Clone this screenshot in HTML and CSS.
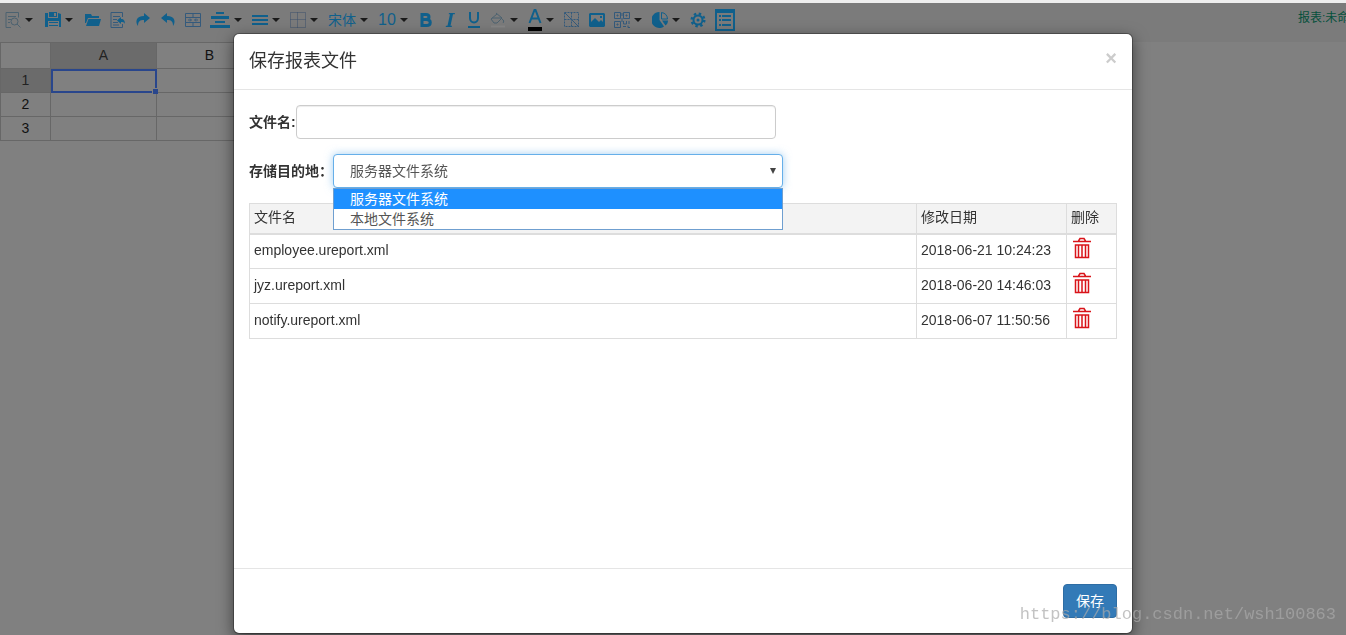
FILE: index.html
```html
<!DOCTYPE html>
<html lang="zh-CN">
<head>
<meta charset="utf-8">
<title>保存报表文件</title>
<link rel="stylesheet" href="styles.css">
</head>
<body>
<header class="toolbar">
  <div class="tools">
    <button class="tool file menu" aria-label="预览"><svg width="16" height="16" viewBox="0 0 16 16" class="line thin faded"><path d="M6 15.500H1V.5h12.500v5M3 4.500h8M3 7.500h3M3 10.500h2"/><circle cx="9.500" cy="9.500" r="3.500"/><path d="M12 12l3.500 3.500"/></svg></button>
    <button class="tool file menu" aria-label="保存"><svg width="16" height="16" viewBox="0 0 16 16" class="solid"><path fill-rule="evenodd" d="M0 1h3v5h10V1l3 1v13h-2V9H3v6H0zM4 0h8v5H4zm5 1v3h2V1zM4 10h9v1H4zm0 3h9v1H4z"/></svg></button>
    <button class="tool" aria-label="打开"><svg width="16" height="16" viewBox="0 0 16 16" class="solid"><path d="M0 2h6l1 2h7v2H3L1 11H0zM3.500 7H16l-2 7H1z"/></svg></button>
    <button class="tool" aria-label="导入"><svg width="16" height="16" viewBox="0 0 16 16" class="line thin"><path d="M12.500 5V.5H1v15h11.500V12M3 4.500h7M3 7.500h4M3 10.500h5M3 13h6"/><path class="solid" d="M7 8.500L11 5v2c3 0 4 2 4 5-1-2-2-2-4-2v2z"/></svg></button>
    <button class="tool" aria-label="重做"><svg width="16" height="16" viewBox="0 0 16 16" class="solid"><path d="M9 1l6 5-6 5V8C5 8 3 9 3 14 0 10 1 4 9 4z"/></svg></button>
    <button class="tool" aria-label="撤销"><svg width="16" height="16" viewBox="0 0 16 16" class="solid"><path d="M7 1L1 6l6 5V8c4 0 6 1 6 6 3-4 2-10-6-10z"/></svg></button>
    <button class="tool" aria-label="合并单元格"><svg width="16" height="16" viewBox="0 0 16 16" class="line thin"><path d="M.5 1.500h15v13H.5zM.5 5.500h15M.5 10.500h15M8 1.500v4M8 10.500v4M3 8h3M10 8h3M5 6.500L6.500 8 5 9.500M11 6.500L9.500 8 11 9.500"/></svg></button>
    <button class="tool menu" aria-label="水平对齐"><svg width="20" height="16" viewBox="0 0 20 16" class="solid"><path d="M6 0h8v2H6zM1 4h18v3H1zM5 9h10v2H5zM0 13h20v3H0z"/></svg></button>
    <button class="tool menu" aria-label="垂直对齐"><svg width="16" height="16" viewBox="0 0 16 16" class="solid"><path d="M0 3h16v2H0zM0 7h16v2H0zM0 11h16v2H0z"/></svg></button>
    <button class="tool menu" aria-label="边框"><svg width="16" height="16" viewBox="0 0 16 16" class="line dotted"><path d="M.5.500h15v15H.5zM.5 7.500h15M7.500 .5v15"/></svg></button>
    <button class="tool menu">宋体</button>
    <button class="tool menu size">10</button>
    <button class="tool format" aria-label="粗体"><svg width="12" height="14" viewBox="0 0 12 14" fill="none" stroke="#10608c" stroke-width="3"><path d="M2 1.500h4c4 0 4 5 0 5H2zM2 6.500h4.500c5 0 5 6 0 6H2z"/></svg></button>
    <button class="tool format" aria-label="斜体"><svg width="12" height="14" viewBox="0 0 12 14" class="solid"><path d="M5 0h6l-.3 1.300H9L6.500 12.700H8L7.700 14h-6L2 12.700h1.500L6 1.300H4.700z"/></svg></button>
    <button class="tool format" aria-label="下划线"><svg width="14" height="16" viewBox="0 0 14 16" fill="none" stroke="#10608c" stroke-width="2"><path d="M3 0v6c0 6 8 6 8 0V0M1 15h12"/></svg></button>
    <button class="tool menu" aria-label="背景色"><svg width="16" height="16" viewBox="0 0 16 16" class="line thin faded"><path d="M6 1l6 5-5 5H4L1 7l6-5M2 6h10M12 7c2 1 2 3 1 4"/><path d="M1 14.500h14" stroke="#858585" stroke-width="2"/></svg></button>
    <button class="tool menu" aria-label="字体颜色"><svg width="14" height="22" viewBox="0 0 14 22"><path fill="none" stroke="#10608c" stroke-width="2" d="M1.500 14L6.500 1h1l5 13M3.500 9.500h7"/><path d="M0 18h14v4H0z"/></svg></button>
    <button class="tool" aria-label="斜线表头"><svg width="16" height="16" viewBox="0 0 16 16" class="line thin"><path stroke-dasharray="2 1" d="M.5.500h14v14H.5zM.5 7.500h14M7.500.500v14"/><path d="M1 1l14 14"/></svg></button>
    <button class="tool" aria-label="图片"><svg width="16" height="16" viewBox="0 0 16 16" class="solid"><path fill-rule="evenodd" d="M1 1h14l1 1v12l-1 1H1l-1-1V2zm1 2v7l4-4 4 4 2-2 2 2V3zm9 1h2v2h-2z"/></svg></button>
    <button class="tool menu" aria-label="二维码"><svg width="16" height="16" viewBox="0 0 16 16" class="line thin"><path d="M.5.500h6v6h-6zM9.500.500h6v6h-6zM.5 9.500h6v6h-6zM3 3h1v1H3zM12 3h1v1h-1zM3 12h1v1H3zM9.500 9v3h3V9M15 9v3M9 14.500h3M14 13.500v2h2M8 1v3M8 6v4"/></svg></button>
    <button class="tool menu" aria-label="图表"><svg width="16" height="16" viewBox="0 0 16 16" class="solid"><path d="M7.500 0v8l4.500 6.500A8 8 0 1 1 7.500 0z"/><path class="line" d="M9.500.500a7 7 0 0 1 6 6.500h-6z"/><path d="M10 8.500h6c0 2-1 4-2.500 5z"/></svg></button>
    <button class="tool" aria-label="设置"><svg width="16" height="16" viewBox="0 0 16 16"><g fill="none" stroke="#10608c"><circle cx="8" cy="8" r="4.500" stroke-width="2"/><circle cx="8" cy="8" r="6.300" stroke-width="2.400" stroke-dasharray="2.400 2.548"/></g><circle cx="8" cy="8" r="1.500" class="solid"/></svg></button>
    <button class="tool" aria-label="属性"><svg width="20" height="22" viewBox="0 0 20 22" class="solid"><path fill-rule="evenodd" d="M0 0h20v22H0zm2 4v16h16V4zm2 2h2v2H4zm3 0h9v2H7zm-3 4h2v2H4zm3 0h9v2H7zm-3 5h2v2H4zm3 0h9v2H7z"/></svg></button>
  </div>
  <span class="report-name">报表:未命名</span>
</header>
<table class="sheet">
  <tr><th></th><th class="active column">A</th><th class="column">B</th></tr>
  <tr><th class="active">1</th><td class="selected"><i class="handle"></i></td><td></td></tr>
  <tr><th>2</th><td></td><td></td></tr>
  <tr><th>3</th><td></td><td></td></tr>
</table>
<div class="overlay">
  <section class="dialog" role="dialog" aria-labelledby="dialog-title">
    <div class="dialog-head">
      <h1 id="dialog-title">保存报表文件</h1>
      <button class="close" aria-label="关闭">×</button>
    </div>
    <div class="dialog-body">
      <div class="field">
        <label for="file-name">文件名:</label>
        <input id="file-name" class="control name" type="text">
      </div>
      <div class="field">
        <label for="target">存储目的地：</label>
        <div class="picker">
          <select id="target" class="control target">
            <option>服务器文件系统</option>
            <option>本地文件系统</option>
          </select>
          <svg class="arrow" width="6" height="6" viewBox="0 0 6 6"><path d="M0 0h6L3 6z"/></svg>
          <ul class="choices">
            <li class="current">服务器文件系统</li>
            <li>本地文件系统</li>
          </ul>
        </div>
      </div>
      <table class="files">
        <thead><tr><th>文件名</th><th class="date">修改日期</th><th class="remove">删除</th></tr></thead>
        <tbody>
          <tr><td>employee.ureport.xml</td><td>2018-06-21 10:24:23</td><td><button class="trash" aria-label="删除"><svg width="18" height="22" viewBox="0 0 18 22"><path d="M0 4.500h18M5.500 4L7 1.500h4L12.500 4M2.500 8h13v12.500h-13zM5.500 8v12M9 8v12M12.500 8v12"/></svg></button></td></tr>
          <tr><td>jyz.ureport.xml</td><td>2018-06-20 14:46:03</td><td><button class="trash" aria-label="删除"><svg width="18" height="22" viewBox="0 0 18 22"><path d="M0 4.500h18M5.500 4L7 1.500h4L12.500 4M2.500 8h13v12.500h-13zM5.500 8v12M9 8v12M12.500 8v12"/></svg></button></td></tr>
          <tr><td>notify.ureport.xml</td><td>2018-06-07 11:50:56</td><td><button class="trash" aria-label="删除"><svg width="18" height="22" viewBox="0 0 18 22"><path d="M0 4.500h18M5.500 4L7 1.500h4L12.500 4M2.500 8h13v12.500h-13zM5.500 8v12M9 8v12M12.500 8v12"/></svg></button></td></tr>
        </tbody>
      </table>
    </div>
    <div class="dialog-foot"><button class="save">保存</button></div>
  </section>
</div>
<div class="watermark">https://blog.csdn.net/wsh100863</div>
</body>
</html>
```
FILE: styles.css
```css
* { box-sizing: border-box; }
body {
  margin: 0;
  min-height: 100vh;
  overflow: hidden;
  background: #808080;
  color: #333;
  font: 14px/20px "Liberation Sans", "Noto Sans CJK SC", sans-serif;
}
button { border: 0; padding: 0; background: none; font: inherit; color: inherit; cursor: pointer; }

.toolbar {
  display: flex;
  justify-content: space-between;
  height: 42px;
  padding-left: 5px;
  border-top: 3px solid #eee;
  background: #7b7b7b;
  overflow: hidden;
}
.tools { display: flex; align-items: center; height: 34px; }
.tool {
  display: flex;
  flex: none;
  align-items: center;
  justify-content: center;
  min-width: 16px;
  height: 24px;
  margin-right: 9px;
  color: #10608c;
  white-space: nowrap;
}
.tool.format { margin-right: 8px; }
.tool.menu { margin-right: 10px; }
.tool.size { font-size: 16px; }
.tool.file { margin-right: 12px; }
.tool.menu::after {
  content: "";
  margin-left: 4px;
  border: 4px solid transparent;
  border-top-color: #1a1a1a;
  border-bottom: 0;
}
.solid { fill: #10608c; stroke: none; }
.line { fill: none; stroke: #10608c; }
.thin { stroke: #345a7c; }
.dotted { stroke: #3c506c; stroke-dasharray: 1 1; }
.faded { stroke: #4c6270; }
.report-name {
  flex: none;
  width: 48px;
  padding-top: 6px;
  color: #06503c;
  font-size: 12px;
  line-height: 18px;
  white-space: nowrap;
}

.sheet { border-collapse: collapse; table-layout: fixed; }
.sheet th, .sheet td {
  width: 106px;
  height: 24px;
  padding: 0 0 2px;
  border: 1px solid #676767;
  color: #111;
  font-weight: normal;
}
.sheet th:first-child { width: 50px; }
.sheet tr:first-child th { height: 26px; }
.sheet .active { background: #6b6b6b; color: #222; }
.sheet .selected { position: relative; outline: 2px solid #29468c; outline-offset: -2px; }
.handle {
  position: absolute;
  right: -2px;
  bottom: -2px;
  width: 6px;
  height: 6px;
  border: 1px solid #808080;
  border-width: 1px 0 0 1px;
  background: #29468c;
}

.overlay {
  position: fixed;
  inset: 0;
  display: flex;
  justify-content: center;
  padding: 33px 0 1px 20px;
}
.dialog {
  display: flex;
  flex-direction: column;
  width: 900px;
  max-width: 100%;
  border: 1px solid rgba(0, 0, 0, .3);
  border-radius: 6px;
  background: #fff;
  background-clip: padding-box;
  box-shadow: 0 5px 15px rgba(0, 0, 0, .5);
}
.dialog-head {
  display: flex;
  justify-content: space-between;
  padding: 15px;
  border-bottom: 1px solid #e5e5e5;
}
.dialog-head h1 { margin: 0; font-size: 18px; font-weight: normal; line-height: 25px; }
.close { height: 18px; color: #ccc; font-size: 20px; font-weight: bold; line-height: 18px; }
.dialog-body { flex: 1; padding: 15px; }
.field { display: flex; align-items: center; margin-bottom: 15px; }
.field label { font-weight: bold; white-space: nowrap; }
.control {
  height: 34px;
  padding: 6px 12px;
  border: 1px solid #ccc;
  border-radius: 4px;
  background: #fff;
  color: #555;
  font: inherit;
  box-shadow: inset 0 1px 1px rgba(0, 0, 0, .075);
}
.name { width: 480px; }
.picker { position: relative; width: 450px; }
.target {
  width: 100%;
  padding-left: 16px;
  border-color: #66afe9;
  appearance: none;
  box-shadow: 0 0 8px rgba(102, 175, 233, .6);
}
.arrow { position: absolute; right: 7px; top: 14px; fill: #444; }
.choices {
  position: absolute;
  top: 100%;
  left: 0;
  right: 0;
  margin: 0;
  padding: 0;
  border: 1px solid #6f9fd0;
  background: #fff;
  color: #555;
  list-style: none;
}
.choices li { padding-left: 16px; }
.choices .current { background: #1e90ff; color: #fff; }

.files { width: 100%; border-collapse: collapse; table-layout: fixed; }
.files th, .files td { border: 1px solid #ddd; padding: 0 4px; text-align: left; font-weight: normal; }
.files th { height: 30px; padding-bottom: 2px; border-bottom-width: 2px; background: #f3f3f3; }
.files td { height: 35px; padding-bottom: 2px; }
.date { width: 150px; }
.remove { width: 50px; }
.trash { display: block; height: 22px; margin: 0 2px 4px; }
.trash svg { display: block; fill: none; stroke: #d9141a; stroke-width: 1.500; }

.dialog-foot { padding: 15px; border-top: 1px solid #e5e5e5; text-align: right; }
.save {
  height: 34px;
  padding: 6px 12px;
  border: 1px solid #2e6da4;
  border-radius: 4px;
  background: #337ab7;
  color: #fff;
}
.watermark {
  position: fixed;
  right: 10px;
  bottom: 10px;
  color: rgba(170, 170, 170, .7);
  font: 17px/20px "Liberation Mono", monospace;
  pointer-events: none;
}
```
